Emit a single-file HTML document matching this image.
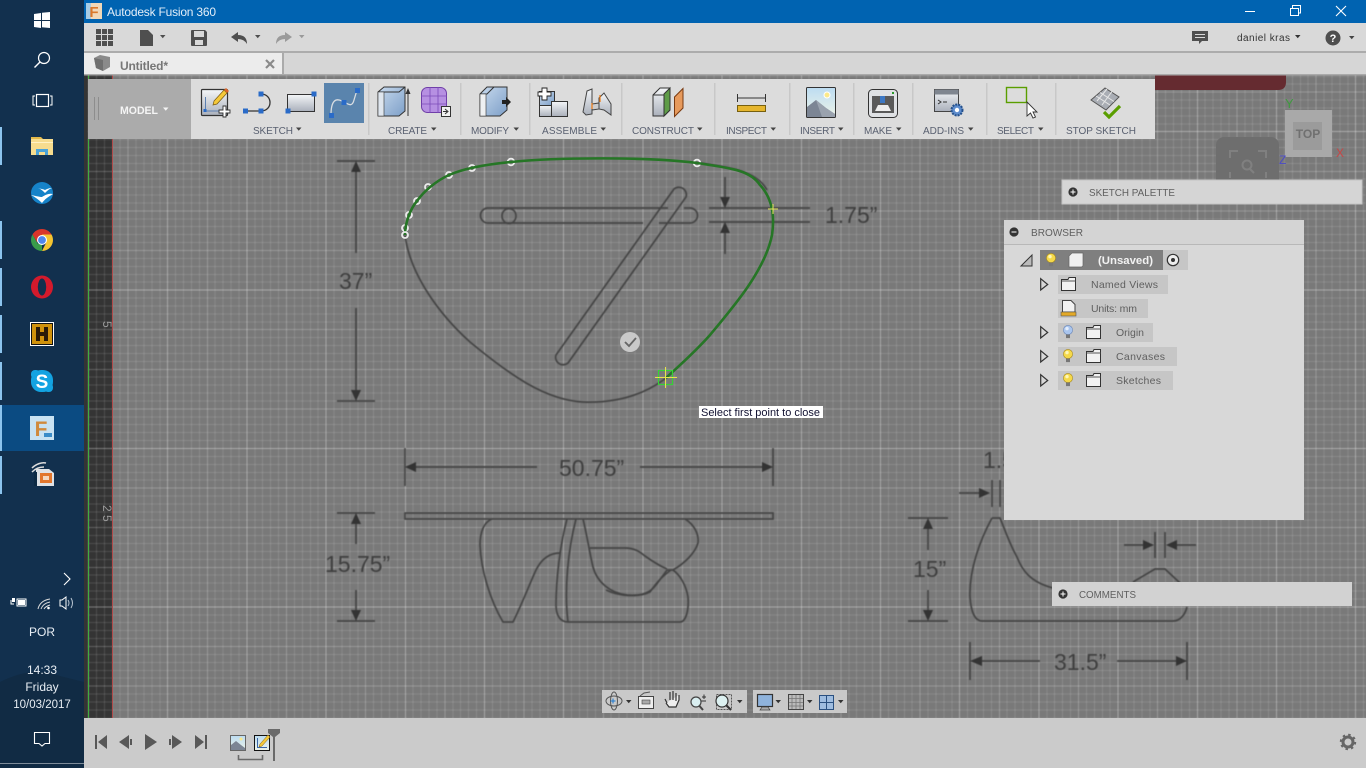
<!DOCTYPE html>
<html lang="en"><head><meta charset="utf-8"><title>Autodesk Fusion 360</title>
<style>
html,body{margin:0;padding:0;width:1366px;height:768px;overflow:hidden;background:#12304e}
svg{display:block;position:absolute;left:0;top:0}
text{font-family:"Liberation Sans",sans-serif}
.l{font-size:10px;fill:#596070}
.b{font-size:10.5px;fill:#5f5f5f}
.d{font-size:23px;fill:#3f3f3f}
.w{font-size:12px;fill:#e8eef4;text-anchor:middle}
#cv{position:absolute;left:84px;top:75px;width:1282px;height:643px;overflow:hidden;background:linear-gradient(90deg,#343434 0,#343434 28px,#797979 28px,#797979 100%)}
#gr{position:absolute;left:4px;top:-23px;width:1278px;height:680px;filter:blur(.5px);background-image:
repeating-linear-gradient(90deg,rgba(255,255,255,.13) 0,rgba(255,255,255,.13) 1px,transparent 1px,transparent 7.92px),
repeating-linear-gradient(180deg,rgba(255,255,255,.13) 0,rgba(255,255,255,.13) 1px,transparent 1px,transparent 7.92px),
repeating-linear-gradient(90deg,rgba(255,255,255,.12) 0,rgba(255,255,255,.12) 1px,transparent 1px,transparent 39.6px),
repeating-linear-gradient(180deg,rgba(255,255,255,.12) 0,rgba(255,255,255,.12) 1px,transparent 1px,transparent 39.6px),
repeating-linear-gradient(90deg,rgba(255,255,255,.15) 0,rgba(255,255,255,.15) 1px,transparent 1px,transparent 79.2px),
repeating-linear-gradient(180deg,transparent 0,transparent 79.2px,rgba(255,255,255,.18) 79.2px,rgba(255,255,255,.18) 80.2px,transparent 80.2px,transparent 158.4px)}
</style></head><body>
<div id="cv"><div id="gr"></div></div>
<svg width="1366" height="768" viewBox="0 0 1366 768" xmlns="http://www.w3.org/2000/svg">
<defs>
<linearGradient id="bx" x1="0" y1="0" x2="0" y2="1"><stop offset="0" stop-color="#f4f6f8"/><stop offset="1" stop-color="#aab0bb"/></linearGradient>
<linearGradient id="bl" x1="0" y1="0" x2="1" y2="1"><stop offset="0" stop-color="#c8daee"/><stop offset="1" stop-color="#7d9fc8"/></linearGradient>
<linearGradient id="sky" x1="0" y1="0" x2="0" y2="1"><stop offset="0" stop-color="#bcdcf2"/><stop offset="1" stop-color="#eef4e8"/></linearGradient>
<g id="folder"><path d="M.5 2.5H7L8 .5H14.5V13.5H.5Z" fill="#f2f2f2" stroke="#333"/><path d="M.5 4H14.5" stroke="#555"/></g>
<g id="bulbY"><circle cx="5" cy="5" r="4.6" fill="#f5d94a" stroke="#a88a20" stroke-width=".6"/><circle cx="4" cy="3.6" r="1.7" fill="#fdf6b8"/><rect x="3" y="9.5" width="4" height="3.6" fill="#777"/></g>
<g id="bulbB"><circle cx="5" cy="5" r="4.6" fill="#a9c5ee" stroke="#6c88b8" stroke-width=".6"/><circle cx="4" cy="3.6" r="1.7" fill="#e4eefb"/><rect x="3" y="9.5" width="4" height="3.6" fill="#777"/></g>
<path id="tri" d="M.7.7L7.7 6.5L.7 12Z" fill="none" stroke="#333" stroke-width="1.2"/>
<path id="c" d="M0 0H5.5L2.75 3.2Z"/>
</defs>

<!-- canvas lines -->
<rect x="88" y="75" width="1" height="643" fill="#3fae3f"/>
<rect x="112" y="75" width="1" height="643" fill="#b04a4a"/>
<text transform="translate(103,321) rotate(90)" font-size="12" fill="#9a9a9a">5</text>
<text transform="translate(103,505) rotate(90)" font-size="12" fill="#9a9a9a">2 5</text>
<path d="M1155 75H1286V82Q1286 90 1278 90H1155Z" fill="#652b30"/>

<!-- drawing -->
<g style="filter:blur(.55px)">
<g fill="none" stroke="#444" stroke-width="1.7">
<path d="M666 378C640 398 610 403 583 402C545 400 510 375 470 342C440 315 410 275 405 235"/>
<path d="M700 163C735 168 757 172 767 190"/>
<path d="M488 208H668M684 208H690A7.5 7.5 0 0 1 690 223H659M643 223H488A7.5 7.5 0 0 1 488 208"/>
<ellipse cx="509" cy="216" rx="7" ry="7.5"/>
<path d="M556 355L674 189A7.5 7.5 0 0 1 686 197L568 363A7.5 7.5 0 0 1 556 355Z"/>
<path d="M337 161H375M337 401H375M356 172V253M356 308V390M709 208H810M709 222H810M725 177V197M725 233V254"/>
<path d="M405 448V486M773 448V486M416 467H537M640 467H762M337 513H375M337 621H375M356 524V544M356 590V610"/>
<rect x="405" y="513" width="368" height="6"/>
<path d="M492 519C484 522 480 532 480 545C481 570 490 600 503 622H513C522 604 530 583 536 570C542 558 550 553 560 553"/>
<path d="M567 519C560 545 556 580 556 605C556 615 560 622 568 622M576 519C568 550 564 590 568 622H680C686 622 689 610 688 597C686 585 680 575 673 570M583 519C587 535 590 555 593 567C597 582 610 593 627 595C642 596 650 593 656 585L667 570"/>
<path d="M685 519C695 525 699 535 698 543C695 553 685 563 673 570H667M590 548H625C635 548 640 552 645 556C652 561 660 566 667 569M606 590C620 597 640 597 650 592C655 585 660 578 671 570"/>
<path d="M908 518H948M908 621H948M928 529V550M928 590V610M992 480V507M1000 480V507M959 493H980M1155 532V558M1165 532V558M1124 545H1143M1177 545H1196"/>
<path d="M992 518H1000C1005 530 1010 545 1017 557C1022 570 1030 582 1053 588M992 518C980 540 969 570 970 597C971 612 975 621 982 621H1173C1180 621 1185 615 1187 607M1133 582L1155 569H1165L1180 583"/>
<path d="M970 642V680M1187 642V680M982 661H1040M1117 661H1176"/>
</g>
<g fill="#333">
<path d="M356 161L351 172H361ZM356 401L351 390H361ZM725 208L720 197H730ZM725 222L720 233H730ZM405 467L416 462V472ZM773 467L762 462V472ZM356 513L351 524H361ZM356 621L351 610H361ZM990 493L979 488V498ZM1154 545L1143 540V550ZM1166 545L1177 540V550ZM928 518L923 529H933ZM928 621L923 610H933ZM970 661L982 656V666ZM1187 661L1176 656V666Z"/>
</g>
<text class="d" x="339" y="289">37”</text>
<text class="d" x="825" y="223">1.75”</text>
<text class="d" x="559" y="476">50.75”</text>
<text class="d" x="325" y="572">15.75”</text>
<text class="d" x="913" y="577">15”</text>
<text class="d" x="1054" y="670">31.5”</text>
<text class="d" x="983" y="468">1.5”</text>
</g>
<g fill="none" stroke="#ececec" stroke-width="1.800">
<circle cx="405" cy="228" r="3"/><circle cx="409" cy="215" r="3"/><circle cx="417" cy="201" r="3"/><circle cx="428" cy="187" r="3"/><circle cx="449" cy="175" r="3"/><circle cx="472" cy="168" r="3"/><circle cx="511" cy="162" r="3.300"/><circle cx="697" cy="163" r="3.300"/>
</g>
<path d="M405 235C405 222 411 208 417 201C424 191 436 181 449 175C465 168 490 164 511 162C560 157 650 157 697 163C730 168 750 170 760 185C772 198 775 215 772 235C765 270 735 305 710 335C695 352 680 365 666 378" fill="none" stroke="#267626" stroke-width="2.600"/>
<circle cx="405" cy="235" r="3" fill="none" stroke="#ececec" stroke-width="1.800"/>
<path d="M768 209H778M773 204V214" stroke="#e8e860" fill="none"/>
<circle cx="630" cy="342" r="10" fill="#c9c9c9"/><path d="M625 342L629 346L636 338" stroke="#666" stroke-width="1.8" fill="none"/>
<rect x="658.5" y="370.5" width="14" height="14" fill="none" stroke="#35d335" stroke-width="1.2"/>
<path d="M655 377.5H677M665.5 367V388" stroke="#e6e64a" fill="none"/>
<rect x="699" y="406" width="124" height="12" fill="#fff"/>
<text x="701" y="416" font-size="11" fill="#101030" textLength="119" lengthAdjust="spacingAndGlyphs">Select first point to close</text>

<!-- view cube -->
<rect x="1216" y="137" width="63" height="56" rx="8" fill="#6e6e6e"/>
<path d="M1230 158V151H1238M1258 151H1266V158M1230 172V178M1266 172V178" stroke="#808080" stroke-width="2" fill="none"/><circle cx="1247" cy="165" r="4.500" fill="none" stroke="#808080" stroke-width="2"/><path d="M1250 169L1254 173" stroke="#808080" stroke-width="2"/>
<rect x="1285" y="110" width="47" height="47" fill="#a9a9a9"/><rect x="1293" y="122" width="29" height="28" fill="#9b9b9b"/>
<text x="1308" y="138" font-size="12" font-weight="bold" fill="#707070" text-anchor="middle">TOP</text>
<text x="1285" y="108" font-size="13" fill="#3f9a3f">Y</text><text x="1336" y="157" font-size="12" fill="#c84545">X</text><text x="1279" y="164" font-size="12" fill="#4a4ac8">Z</text>

<!-- panels -->
<rect x="1062" y="180" width="300" height="24" fill="#d5d5d5" stroke="#c4c4c4"/>
<circle cx="1073" cy="192" r="4.6" fill="#333"/><path d="M1070.5 192H1075.5M1073 189.5V194.5" stroke="#fff"/>
<text class="b" x="1089" y="196" style="font-size:10px" textLength="86" lengthAdjust="spacingAndGlyphs">SKETCH PALETTE</text>
<rect x="1004" y="220" width="300" height="300" fill="#d8d8d8"/><rect x="1004" y="220" width="300" height="24" fill="#d4d4d4"/><rect x="1004" y="244" width="300" height="1" fill="#b8b8b8"/>
<circle cx="1014" cy="232" r="4.6" fill="#333"/><path d="M1011.5 232H1016.5" stroke="#fff"/>
<text class="b" x="1031" y="236" textLength="52" lengthAdjust="spacingAndGlyphs">BROWSER</text>
<path d="M1021 266L1032 255V266Z" fill="#bbb" stroke="#333"/>
<rect x="1040" y="250" width="148" height="20" fill="#c6c6c6"/><rect x="1040" y="250" width="123" height="20" fill="#7f7f7f"/>
<use href="#bulbY" x="1046" y="253"/>
<path d="M1072 253H1083V265Q1083 267 1081 267H1069V256Z" fill="#f0f0f0" stroke="#666" stroke-width=".7"/>
<text x="1098" y="264" font-size="11" font-weight="bold" fill="#f2f2f2" textLength="55" lengthAdjust="spacingAndGlyphs">(Unsaved)</text>
<circle cx="1173" cy="260" r="5.7" fill="#eee" stroke="#333" stroke-width="1.2"/><circle cx="1173" cy="260" r="2" fill="#333"/>
<rect x="1058" y="275" width="110" height="19" fill="#c6c6c6"/><rect x="1058" y="299" width="90" height="19" fill="#c6c6c6"/><rect x="1058" y="323" width="95" height="19" fill="#c6c6c6"/><rect x="1058" y="347" width="119" height="19" fill="#c6c6c6"/><rect x="1058" y="371" width="115" height="19" fill="#c6c6c6"/>
<use href="#tri" x="1040" y="278"/><use href="#tri" x="1040" y="326"/><use href="#tri" x="1040" y="350"/><use href="#tri" x="1040" y="374"/>
<use href="#folder" x="1061" y="277"/>
<path d="M1062.5 300.5H1071L1075 304.5V312H1062.5Z" fill="#f2f2f2" stroke="#444"/><rect x="1061" y="312" width="15" height="4" fill="#e3a928" stroke="#555" stroke-width=".6"/>
<use href="#bulbB" x="1063" y="325"/><use href="#folder" x="1086" y="325"/>
<use href="#bulbY" x="1063" y="349"/><use href="#folder" x="1086" y="349"/>
<use href="#bulbY" x="1063" y="373"/><use href="#folder" x="1086" y="373"/>
<text class="b" x="1091" y="288" textLength="67">Named Views</text>
<text class="b" x="1091" y="312" textLength="46">Units: mm</text>
<text class="b" x="1116" y="336" textLength="28">Origin</text>
<text class="b" x="1116" y="360" textLength="49">Canvases</text>
<text class="b" x="1116" y="384" textLength="45">Sketches</text>
<rect x="1052" y="582" width="300" height="24" fill="#d2d2d2"/>
<circle cx="1063" cy="594" r="4.6" fill="#333"/><path d="M1060.5 594H1065.5M1063 591.5V596.5" stroke="#fff"/>
<text class="b" x="1079" y="598" style="font-size:10px" textLength="57" lengthAdjust="spacingAndGlyphs">COMMENTS</text>

<!-- sidebar -->
<rect x="0" y="0" width="84" height="768" fill="#12304e"/>
<path d="M0 682C20 672 40 668 60 676L84 682V768H0Z" fill="#112b44"/>
<rect x="0" y="763" width="84" height="1" fill="#7e8c9a"/>
<rect x="0" y="405" width="84" height="46" fill="#0b4b82"/>
<g fill="#8cc4ee"><rect y="127" width="2" height="38"/><rect y="221" width="2" height="38"/><rect y="268" width="2" height="38"/><rect y="315" width="2" height="38"/><rect y="362" width="2" height="38"/><rect y="405" width="2" height="46"/><rect y="456" width="2" height="38"/></g>
<path d="M34 14L41 13V20H34ZM42 12.7L50 12V20H42ZM34 21H41V28L34 27ZM42 21H50V28L42 27.2Z" fill="#fff"/>
<circle cx="44" cy="58" r="5.5" fill="none" stroke="#fff" stroke-width="1.2"/><path d="M40 62L34.5 67.500" stroke="#fff" stroke-width="1.4"/>
<path d="M35 96H33V105H35M50 96H52V105H50" fill="none" stroke="#fff"/><rect x="36.500" y="94.500" width="12" height="12" fill="none" stroke="#fff" stroke-width="1.2"/>
<path d="M31 139H53V155H31Z" fill="#f6dc8e"/><path d="M31 137H41L43 139H31Z" fill="#e3b94a"/><path d="M36 155V149H48V155H45V152H39V155Z" fill="#4aa3d8"/><rect x="31" y="142" width="22" height="1" fill="#fff2c4"/>
<circle cx="42" cy="193" r="11" fill="#1683c9"/>
<path d="M31 195C36 196 40 197 42 197C45 195 49 193 53 194C48 197 45 199 42 203C39 200 35 197 31 195Z" fill="#fff"/>
<path d="M38 188C41 189 43 189 45 190C47 189 49 188 52 188C49 189 47 191 45 193C43 191 41 189 38 188Z" fill="#fff"/>
<path d="M42 240L51.500 234.500A11 11 0 0 0 32.500 234.500L37 242Z" fill="#d9352a"/><path d="M42 251A11 11 0 0 1 32.500 234.500L38 244L42 240Z" fill="#3a9c4a"/><path d="M42 251A11 11 0 0 0 51.500 234.500H42L46 243Z" fill="#f4c430"/><circle cx="42" cy="240" r="5" fill="#fff"/><circle cx="42" cy="240" r="3.900" fill="#4f86ec"/>
<ellipse cx="42" cy="287" rx="11" ry="11.500" fill="#d41a2c"/><ellipse cx="42" cy="287" rx="4.200" ry="8.500" fill="#12304e"/>
<rect x="30" y="322" width="24" height="24" fill="#fff"/><rect x="31" y="323" width="22" height="22" fill="#111"/><rect x="32" y="324" width="20" height="20" fill="#d0920c"/><path d="M36 327H40V332H44V327H48V341H44V336H40V341H36Z" fill="#2a1a08"/>
<rect x="31" y="370" width="22" height="22" rx="10" fill="#13a3e2"/><rect x="31" y="370" width="9" height="9" rx="4" fill="#13a3e2"/><rect x="44" y="383" width="9" height="9" rx="4" fill="#13a3e2"/><text x="42" y="388" font-size="19" font-weight="bold" fill="#fff" text-anchor="middle">S</text>
<rect x="30" y="416" width="24" height="24" fill="#c8e2f2"/><text x="41" y="436" font-size="21" font-weight="bold" fill="#d08a3c" text-anchor="middle">F</text><rect x="44" y="433" width="8" height="4" fill="#3a8cc8"/>
<path d="M36 469H49L54 473V486H36Z" fill="#dfe2e6"/><rect x="40" y="473" width="12" height="10" fill="#e2762c"/><rect x="43" y="476" width="6" height="4" fill="#f4d8c0"/><path d="M32 468C36 464 42 462 46 463M32 472C36 468 40 467 44 467" stroke="#ddd" stroke-width="1.500" fill="none"/><rect x="34" y="472" width="3" height="14" fill="#0d2a44"/>
<path d="M64 573L70 579L64 585" stroke="#fff" fill="none" stroke-width="1.100"/>
<path d="M11 600V604H14M17 599H26V606H17Z" fill="none" stroke="#fff"/><rect x="18" y="600" width="7" height="5" fill="#fff"/><rect x="12" y="598" width="3" height="4" fill="#fff"/>
<path d="M38 609C39 604 43 600 50 599M41 609C42 606 45 603 50 602M44 609C45 607 47 606 50 605" stroke="#ddd" fill="none"/><circle cx="48.500" cy="608" r="1.300" fill="#fff"/>
<path d="M60 600V606H62L66 609V597L62 600Z" fill="none" stroke="#fff"/><path d="M68 600Q70 603 68 606M71 598Q74 603 71 608" stroke="#bcc8d4" fill="none"/>
<text class="w" x="42" y="636">POR</text>
<text class="w" x="42" y="674">14:33</text>
<text class="w" x="42" y="691">Friday</text>
<text class="w" x="42" y="708" style="font-size:11.500px">10/03/2017</text>
<path d="M34.500 732.500H49.500V743.500H45L42 746L39 743.500H34.500Z" fill="none" stroke="#fff" stroke-width="1.100"/>

<!-- title bar -->
<rect x="84" y="0" width="1282" height="23" fill="#0063b1"/>
<rect x="86" y="3" width="16" height="16" fill="#f0d8b8"/><rect x="86" y="3" width="5" height="16" fill="#a8cce4"/><text x="94" y="17" font-size="15" font-weight="bold" fill="#d9782a" text-anchor="middle">F</text>
<text x="107" y="16" font-size="12" fill="#e4eef8" textLength="109">Autodesk Fusion 360</text>
<path d="M1245 11.500H1255" stroke="#fff"/><path d="M1290.500 8.500H1298.500V15.500H1290.500ZM1292.500 8V5.500H1300.500V13H1298.500" fill="none" stroke="#fff"/><path d="M1336 6L1346 16M1346 6L1336 16" stroke="#fff" stroke-width="1.100"/>

<!-- toolbar -->
<rect x="84" y="23" width="1282" height="28" fill="#d9d9d9"/><rect x="84" y="51" width="1282" height="2" fill="#acacac"/>
<g fill="#4f4f4f"><rect x="96" y="29" width="5" height="5"/><rect x="102" y="29" width="5" height="5"/><rect x="108" y="29" width="5" height="5"/><rect x="96" y="35" width="5" height="5"/><rect x="102" y="35" width="5" height="5"/><rect x="108" y="35" width="5" height="5"/><rect x="96" y="41" width="5" height="5"/><rect x="102" y="41" width="5" height="5"/><rect x="108" y="41" width="5" height="5"/>
<path d="M140 30H148L153 35V46H140Z"/><use href="#c" x="160" y="35"/>
<path d="M191 31Q191 30 192 30H205L207 32V45Q207 46 206 46H192Q191 46 191 45ZM194 31V37H204V31ZM195 40V45H203V40Z" fill-rule="evenodd"/>
<path d="M231 37L238 32V35Q247 35 247 44Q244 39 238 39V42Z"/><use href="#c" x="255" y="35"/>
<path d="M292 37L285 32V35Q276 35 276 44Q279 39 285 39V42Z" fill="#9a9a9a"/><use href="#c" x="299" y="35" fill="#9a9a9a"/></g>
<path d="M1192 31H1208V41H1202L1199 44V41H1192Z" fill="#4f4f4f"/><path d="M1195 34.500H1205M1195 37.500H1205" stroke="#d9d9d9"/>
<text x="1237" y="41" font-size="10" fill="#333" textLength="53">daniel kras</text><use href="#c" x="1295" y="35" fill="#333"/>
<circle cx="1333" cy="38" r="7.500" fill="#4f4f4f"/><text x="1333" y="42" font-size="11" font-weight="bold" fill="#fff" text-anchor="middle">?</text><use href="#c" x="1349" y="36" fill="#444"/>

<!-- tabs -->
<rect x="84" y="53" width="1282" height="21" fill="#d6d6d6"/><rect x="84" y="74" width="1282" height="1.500" fill="#aaa"/>
<rect x="84" y="53" width="198" height="21" fill="#ececec"/><rect x="282" y="53" width="2" height="21" fill="#aaa"/>
<path d="M94 58L100 55L110 57V67L103 71L96 68Z" fill="#8a8a8a"/><path d="M94 58L103 60V71L96 68Z" fill="#6f6f6f"/>
<text x="120" y="70" font-size="12" font-weight="bold" fill="#777" textLength="48">Untitled*</text>
<path d="M266 60L274 68M274 60L266 68" stroke="#8a8a8a" stroke-width="2.200"/>

<!-- ribbon -->
<rect x="88" y="79" width="1067" height="60" fill="#dcdcdc"/><rect x="88" y="79" width="103" height="60" fill="#ababab"/>
<path d="M94.500 97V120M98.500 97V120" stroke="#8d8d8d"/>
<text x="120" y="114" font-size="11" font-weight="bold" fill="#f5f5f5" textLength="38" lengthAdjust="spacingAndGlyphs">MODEL</text><use href="#c" x="163" y="107.500" fill="#f5f5f5"/>
<g fill="#c8c8c8"><rect x="368" y="83" width="1.500" height="52"/><rect x="460" y="83" width="1.500" height="52"/><rect x="529" y="83" width="1.500" height="52"/><rect x="621" y="83" width="1.500" height="52"/><rect x="714" y="83" width="1.500" height="52"/><rect x="789" y="83" width="1.500" height="52"/><rect x="853" y="83" width="1.500" height="52"/><rect x="912" y="83" width="1.500" height="52"/><rect x="986" y="83" width="1.500" height="52"/><rect x="1055" y="83" width="1.500" height="52"/></g>

<!-- sketch icons -->
<rect x="201.500" y="89.500" width="26" height="26" rx="1" fill="url(#bx)" stroke="#333" stroke-width="1.200"/>
<path d="M205.500 97V111H221" fill="none" stroke="#5b7fb0"/><rect x="203.500" y="109" width="3" height="3" fill="#2a6bc8"/>
<path d="M214 101L224 90L227 93L217 104L213 105Z" fill="#f5c93a" stroke="#7a5a10" stroke-width=".7"/><path d="M224 90L226 88L229 91L227 93Z" fill="#d9652a"/>
<path d="M219 110H223V106H226V110H230V113H226V117H223V113H219Z" fill="#fff" stroke="#333" stroke-width=".9"/>
<path d="M245 111H261C273 111 273 94 261 94" fill="none" stroke="#333" stroke-width="1.300"/>
<rect x="243" y="108.500" width="5" height="5" fill="#2a6bc8"/><rect x="258.500" y="108.500" width="5" height="5" fill="#2a6bc8"/><rect x="258.500" y="91.500" width="5" height="5" fill="#2a6bc8"/>
<rect x="287.500" y="94.500" width="27" height="17" fill="url(#bx)" stroke="#333"/><rect x="311.500" y="91.500" width="5" height="5" fill="#2a6bc8"/><rect x="285.500" y="108.500" width="5" height="5" fill="#2a6bc8"/>
<rect x="324" y="83" width="40" height="40" fill="#5a84ad"/>
<path d="M331 115C331 100 336 98 342 101C348 104 352 108 354 100L357 90" fill="none" stroke="#d8dde2" stroke-width="1.300"/>
<rect x="329" y="113" width="5" height="5" fill="#2a6bc8"/><rect x="341.500" y="100" width="5" height="5" fill="#2a6bc8"/><rect x="355" y="88" width="5" height="5" fill="#2a6bc8"/>
<!-- create -->
<path d="M378 92L384 87H405V111L399 116H378Z" fill="url(#bl)" stroke="#333"/><path d="M378 92H399L405 87" fill="none" stroke="#333"/><path d="M378 92H384V116H378Z" fill="#dfe6ee" stroke="#333" stroke-width=".6"/>
<path d="M408 116V90" stroke="#333"/><path d="M405.500 94L408 88L410.500 94Z" fill="#333"/>
<rect x="421.500" y="87.500" width="25" height="25" rx="6" fill="#b690e2" stroke="#6f3ea8"/><path d="M421 96H447M421 104H447M430 87V113M438 87V113" stroke="#7b4bb8" stroke-width=".8"/>
<rect x="441.500" y="106.500" width="9" height="10" fill="#f2f2f2" stroke="#333"/><path d="M443 111.500H447M445 109L448 111.500L445 114" stroke="#333" fill="none"/>
<!-- modify -->
<path d="M480 94L487 87H507V110L500 116H480Z" fill="url(#bl)" stroke="#333"/><path d="M480 94H487L494 87" fill="none" stroke="#333"/><path d="M480 94H486V116H480Z" fill="#eef0f2" stroke="#333" stroke-width=".6"/><rect x="502" y="100" width="5" height="4" fill="#222"/><path d="M506 97L511 102L506 107Z" fill="#222"/>
<!-- assemble -->
<rect x="539.500" y="91.500" width="15" height="14" fill="url(#bl)" stroke="#333"/><rect x="539.500" y="105.500" width="12" height="11" fill="url(#bx)" stroke="#333"/><rect x="551.500" y="101.500" width="16" height="15" fill="url(#bx)" stroke="#333"/>
<path d="M542 88H547V92H551V96H547V100H542V96H538V92H542Z" fill="#fff" stroke="#222" stroke-width=".9"/>
<path d="M583 112L587 91L592 89V114L586 115Z" fill="url(#bx)" stroke="#444"/><path d="M599 98L604 93L611 104V115L604 110L599 109Z" fill="url(#bx)" stroke="#444"/><path d="M592 104L599 103V109L592 110Z" fill="#ccc" stroke="#444"/><path d="M592 103V109M600 95V102" stroke="#ef7a10" stroke-width="1.200"/>
<!-- construct -->
<path d="M653 95L660 88H670V110L664 116H653Z" fill="url(#bx)" stroke="#333"/><path d="M664 94L670 88V110L664 116Z" fill="#5e9c48" stroke="#333"/><path d="M653 95H664V116" fill="none" stroke="#333"/>
<path d="M674.500 97L683 88.500V108L674.500 116.500Z" fill="#e79a5c" stroke="#7a3a10"/>
<!-- inspect -->
<path d="M737.500 94V102M765.500 94V102M737 98H766" stroke="#333" fill="none"/><rect x="737.500" y="105.500" width="28" height="6" fill="#e6b62e" stroke="#77600f"/>
<!-- insert -->
<g transform="translate(0,-2)"><rect x="806.500" y="89.500" width="29" height="30" rx="1" fill="url(#sky)" stroke="#333"/><circle cx="827" cy="97" r="3" fill="#fbe98a" stroke="#fff"/><path d="M807 119V109L816 102L826 110L835 116V119Z" fill="#7c8594"/><path d="M816 102L826 110L835 116V119H822Z" fill="#9aa2ae"/></g>
<!-- make -->
<g transform="translate(0,-3)"><rect x="868.500" y="92.500" width="29" height="28" rx="4" fill="#dfe1e4" stroke="#333"/><rect x="872" y="99" width="22" height="17" fill="#5a5a5a"/><path d="M875 114L878 108H888L891 114Z" fill="#eee"/><rect x="880" y="99" width="5" height="7" fill="#3d78c4"/><rect x="892" y="95" width="2" height="2" fill="#2a9a2a"/></g>
<!-- add-ins -->
<g transform="translate(0,-2)"><rect x="934.500" y="91.500" width="24" height="22" fill="url(#bx)" stroke="#444"/><rect x="934.500" y="91.500" width="24" height="5" fill="#7f8690"/><path d="M938 102L941 104L938 106M943 104H947" stroke="#333" fill="none"/></g>
<circle cx="957" cy="110" r="5.500" fill="#5d8ccd" stroke="#24508c" stroke-width="2" stroke-dasharray="2 1"/><circle cx="957" cy="110" r="2.200" fill="#fff"/>
<!-- select -->
<rect x="1006.500" y="87.500" width="20" height="15" fill="none" stroke="#5a9e00" stroke-width="1.400"/>
<path d="M1027 102V116L1030.500 113L1033 118L1035.500 117L1033 112H1037Z" fill="#fff" stroke="#333" stroke-width=".9"/>
<!-- stop -->
<g transform="translate(0,-2)"><path d="M1091 102L1105 90L1119 99L1106 112Z" fill="#a9adb4" stroke="#555"/><path d="M1096 98L1110 107M1100 94.500L1114 103.500M1102 107L1112 93.500M1097 103L1107 91" stroke="#e8e8e8"/></g>
<path d="M1104 112L1109 117L1120 106" fill="none" stroke="#5a9e00" stroke-width="3.200"/>
<!-- labels -->
<text class="l" x="253" y="134" textLength="40">SKETCH</text><use href="#c" x="296" y="127.500" fill="#444"/>
<text class="l" x="388" y="134" textLength="39">CREATE</text><use href="#c" x="431" y="127.500" fill="#444"/>
<text class="l" x="471" y="134" textLength="38">MODIFY</text><use href="#c" x="513.500" y="127.500" fill="#444"/>
<text class="l" x="542" y="134" textLength="55">ASSEMBLE</text><use href="#c" x="600.500" y="127.500" fill="#444"/>
<text class="l" x="632" y="134" textLength="62">CONSTRUCT</text><use href="#c" x="697" y="127.500" fill="#444"/>
<text class="l" x="726" y="134" textLength="41">INSPECT</text><use href="#c" x="770.500" y="127.500" fill="#444"/>
<text class="l" x="800" y="134" textLength="35">INSERT</text><use href="#c" x="838" y="127.500" fill="#444"/>
<text class="l" x="864" y="134" textLength="28">MAKE</text><use href="#c" x="896" y="127.500" fill="#444"/>
<text class="l" x="923" y="134" textLength="41">ADD-INS</text><use href="#c" x="968" y="127.500" fill="#444"/>
<text class="l" x="997" y="134" textLength="37">SELECT</text><use href="#c" x="1038" y="127.500" fill="#444"/>
<text class="l" x="1066" y="134" textLength="70">STOP SKETCH</text>

<!-- nav bar -->
<rect x="602" y="690" width="145" height="23" fill="#c9c9c9"/><rect x="753" y="690" width="94" height="23" fill="#c9c9c9"/>
<ellipse cx="614" cy="701" rx="8" ry="5" fill="none" stroke="#555"/><ellipse cx="614" cy="701" rx="3.500" ry="9" fill="none" stroke="#555"/><path d="M610.500 701H615.500M613 698.500V703.500" stroke="#1a78d0"/><use href="#c" x="626" y="700" fill="#333"/>
<rect x="638.500" y="696.500" width="15" height="12" fill="#eee" stroke="#444"/><rect x="642" y="700" width="8" height="4" fill="#aaa" stroke="#444" stroke-width=".6"/><path d="M640 696L644 693L650 692" stroke="#555" fill="none"/>
<path d="M666 703L669 707H676L679 700V695M676 701V693M673 700V691M670 700V692M667 703L665 699" fill="#eee" stroke="#333" stroke-width="1.200"/>
<circle cx="696" cy="702" r="5" fill="#d9eef0" stroke="#444" stroke-width="1.200"/><path d="M699.500 706L703 710" stroke="#444" stroke-width="2"/><path d="M702 697H706M704 694.500V699M701.500 701H706" stroke="#333" fill="none"/>
<rect x="716.500" y="694.500" width="15" height="15" fill="none" stroke="#555" stroke-dasharray="2 1"/><circle cx="722" cy="701" r="6" fill="#dcf0f0" stroke="#333" stroke-width="1.200"/><path d="M726 705L731 710" stroke="#333" stroke-width="2"/><use href="#c" x="737" y="700" fill="#333"/>
<rect x="757.500" y="694.500" width="15" height="12" fill="#8fb3dc" stroke="#333" stroke-width="1.200"/><path d="M762 707H768L770 710H760Z" fill="#aaa" stroke="#444" stroke-width=".7"/><use href="#c" x="775.500" y="700" fill="#333"/>
<rect x="788.500" y="694.500" width="15" height="15" fill="#bbb" stroke="#444"/><path d="M792 695V709M796 695V709M800 695V709M789 698.500H803M789 702.500H803M789 706H803" stroke="#777" stroke-width=".8"/><use href="#c" x="807" y="700" fill="#333"/>
<rect x="819.500" y="695.500" width="14" height="14" fill="#9fbde0" stroke="#2a5080"/><path d="M819.500 702.500H833.500M826.500 695.500V709.500" stroke="#2a5080"/><use href="#c" x="838" y="700" fill="#333"/>

<!-- timeline -->
<rect x="84" y="718" width="1282" height="50" fill="#cbcbcb"/>
<g fill="#585858">
<path d="M95 735H97V749H95ZM107 735V749L98 742Z"/><path d="M119 742L129 735V749ZM130 739H132V745H130Z"/><path d="M145 734L157 742L145 750Z"/><path d="M182 742L172 735V749ZM169 739H171V745H169Z"/><path d="M207 735H205V749H207ZM195 735V749L204 742Z"/>
</g>
<rect x="230.500" y="735.500" width="15" height="15" fill="url(#sky)" stroke="#666"/><path d="M231 750V745L236 741L241 745L245 748V750Z" fill="#7c8594"/><circle cx="241" cy="739" r="1.500" fill="#fbe98a"/>
<rect x="254.500" y="735.500" width="15" height="15" fill="url(#sky)" stroke="#111"/><path d="M257.500 738V747.500H267" fill="none" stroke="#3a66a8"/><path d="M260 744L268 735L270 737L262 746L259 747Z" fill="#f5c93a" stroke="#7a5a10" stroke-width=".5"/>
<path d="M268 729H280V733L275 737V761H273V737L268 733Z" fill="#6a6a6a"/>
<path d="M238.500 755V759.500H262.500V755" fill="none" stroke="#6a6a6a" stroke-width="1.600"/>
<circle cx="1348" cy="742" r="5" fill="none" stroke="#666" stroke-width="3"/><circle cx="1348" cy="742" r="7.200" fill="none" stroke="#666" stroke-width="2" stroke-dasharray="2.500 3.150"/>
</svg>
</body></html>
